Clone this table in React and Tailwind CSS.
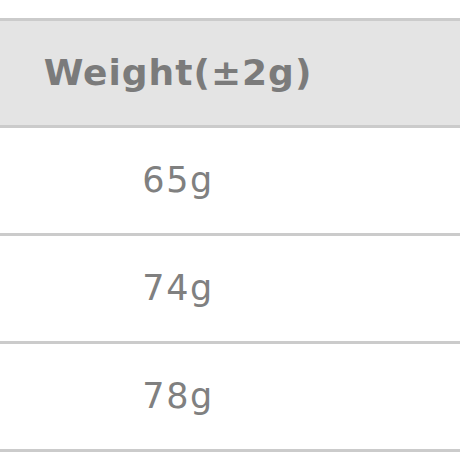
const rows = ['65g', '74g', '78g'];

export default function App() {
  return (
    <div className="h-[460px] w-[460px] overflow-hidden bg-white pt-[18px] font-['DejaVu_Sans',sans-serif]">
      <div className="border-y-[3px] border-[#cbcbcb] bg-[#e4e4e4]">
        <div className="flex h-[104px] w-[356px] items-center justify-center text-[36px] font-bold tracking-[1px] text-[#7b7b7b]">
          Weight(±2g)
        </div>
      </div>
      {rows.map((row) => (
        <div key={row} className="border-b-[3px] border-[#cbcbcb]">
          <div className="flex h-[105px] w-[356px] items-center justify-center text-[35px] tracking-[1.5px] text-[#808080]">
            {row}
          </div>
        </div>
      ))}
    </div>
  );
}
